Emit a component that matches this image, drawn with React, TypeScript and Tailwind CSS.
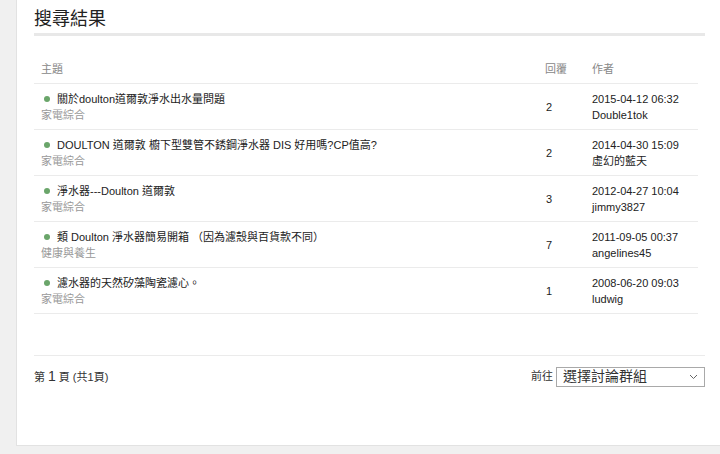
const rows = [
  { title: '關於doulton道爾敦淨水出水量問題', forum: '家電綜合', replies: 2, date: '2015-04-12 06:32', author: 'Double1tok' },
  { title: 'DOULTON 道爾敦 櫥下型雙管不銹鋼淨水器 DIS 好用嗎?CP值高?', forum: '家電綜合', replies: 2, date: '2014-04-30 15:09', author: '虛幻的藍天' },
  { title: '淨水器---Doulton 道爾敦', forum: '家電綜合', replies: 3, date: '2012-04-27 10:04', author: 'jimmy3827' },
  { title: '類 Doulton 淨水器簡易開箱 （因為濾殼與百貨款不同）', forum: '健康與養生', replies: 7, date: '2011-09-05 00:37', author: 'angelines45' },
  { title: '濾水器的天然矽藻陶瓷濾心。', forum: '家電綜合', replies: 1, date: '2008-06-20 09:03', author: 'ludwig' },
];

export default function App() {
  return (
    <div className="h-[454px] w-[720px] overflow-hidden bg-[#f0f0f0] pl-[16px] font-['Liberation_Sans','Noto_Sans_CJK_TC',sans-serif] text-[11px] text-[#333]">
      <div className="h-[446px] border-l border-b border-[#e2e2e2] bg-white pl-[17px] pr-[15px] pt-[7px]">
        {/* heading */}
        <h1 className="font-['Liberation_Serif','Noto_Sans_CJK_TC',serif] text-[18px] leading-[24px] text-[#222]">搜尋結果</h1>
        <div className="mt-[2px] h-[3px] bg-[#e8e8e8]" />

        {/* results table */}
        <div className="mr-[7px] mt-[17px]">
          <div className="flex h-[30px] items-end pb-[7px] leading-[14px] text-[#888]">
            <div className="flex-1 pl-[7px]">主題</div>
            <div className="w-[47px] pl-[7px]">回覆</div>
            <div className="w-[113px] pl-[7px]">作者</div>
          </div>
          {rows.map(r => (
            <div key={r.date} className="flex border-t border-[#ebebeb] pt-[7px] pb-[6px] leading-[16px]">
              <div className="flex-1 pl-[7px]">
                <div className="flex items-center">
                  <span className="ml-[3px] mr-[7px] h-[6px] w-[6px] rounded-full bg-[#6aa56a]" />
                  <span className="text-[#222]">{r.title}</span>
                </div>
                <div className="text-[#999]">{r.forum}</div>
              </div>
              <div className="flex w-[47px] items-center pl-[8px] text-[#222]">{r.replies}</div>
              <div className="w-[113px] pl-[7px] text-[#222]">
                <div>{r.date}</div>
                <div>{r.author}</div>
              </div>
            </div>
          ))}
          <div className="border-t border-[#ebebeb]" />
        </div>

        {/* pagination */}
        <div className="mt-[41px] flex items-center justify-between border-t border-[#ebebeb] pt-[10px]">
          <div className="flex items-baseline text-[#333]">
            <span>第</span>
            <span className="mx-[3px] text-[14px]">1</span>
            <span>頁 (共1頁)</span>
          </div>
          <div className="flex items-center gap-[3px]">
            <span className="text-[#333]">前往</span>
            <div className="flex h-[20px] w-[149px] items-center justify-between border border-[#a9a9a9] pl-[6px] pr-[6px]">
              <span className="font-['Liberation_Serif','Noto_Sans_CJK_TC',serif] text-[14px] leading-[18px] text-[#333]">選擇討論群組</span>
              <svg width="9" height="6" viewBox="0 0 9 6" fill="none" stroke="#666" strokeWidth="1">
                <path d="M1 1l3.5 3.5L8 1" />
              </svg>
            </div>
          </div>
        </div>
      </div>
    </div>
  );
}
